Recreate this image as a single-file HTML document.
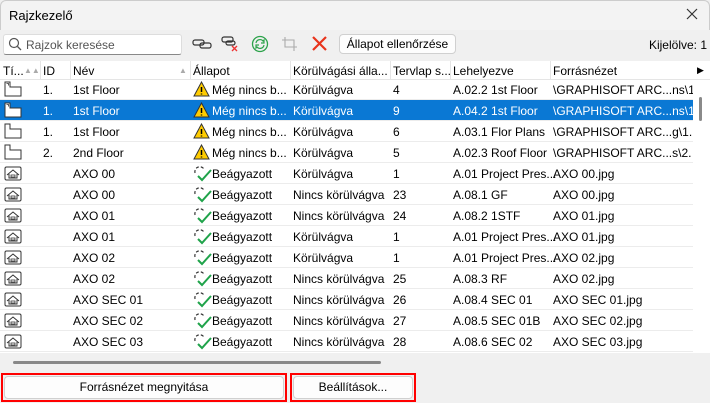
<!DOCTYPE html><html><head><meta charset="utf-8"><style>
*{box-sizing:border-box;margin:0;padding:0}
body{width:710px;height:403px;background:#f0f0f0;font-family:"Liberation Sans",sans-serif;font-size:12px;color:#000;position:relative;overflow:hidden}
.abs{position:absolute}
.title{left:0;top:0;width:710px;height:30px;background:#f3f3f3;border:1px solid #ccc;border-bottom:none;border-radius:6px 6px 0 0}
.table{left:0;top:61px;width:693px;height:292px;background:#fff}
.hdr{left:0;top:61px;width:710px;height:19px;background:#fff;border-bottom:1px solid #e5e5e5}
.hc{position:absolute;top:3px;white-space:nowrap}
.sep{position:absolute;top:0;width:1px;height:19px;background:#e5e5e5}
.row{position:absolute;left:0;width:693px;height:21px;border-bottom:1px solid #ececec;overflow:hidden}
.row span{position:absolute;top:4px;white-space:nowrap}
.sel{background:#0a78d4;color:#fff}
.btn{background:#fdfdfd;border:1px solid #d0d0d0;border-radius:4px;text-align:center}
</style></head><body>
<div class="abs title"></div>
<div class="abs" style="left:9px;top:8px;font-size:13px">Rajzkezelő</div>
<svg class="abs" style="left:686px;top:8px" width="12" height="12"><path d="M1 1L11 11M11 1L1 11" stroke="#333" stroke-width="1.2"/></svg>
<div class="abs" style="left:3px;top:34px;width:179px;height:21px;background:#fff;border:1px solid #ddd;border-bottom:1px solid #888;border-radius:3px"></div>
<svg class="abs" style="left:8px;top:37px" width="14" height="14"><circle cx="6" cy="6" r="4.5" fill="none" stroke="#555" stroke-width="1.2"/><path d="M9.5 9.5L13 13" stroke="#555" stroke-width="1.3"/></svg>
<div class="abs" style="left:26px;top:38px;color:#555;font-size:12px">Rajzok keresése</div>
<svg class="abs" style="left:192px;top:37px" width="22" height="14"><rect x="1" y="3" width="11" height="5" rx="2" fill="none" stroke="#333" stroke-width="1.2"/><rect x="8" y="6" width="11" height="5" rx="2" fill="none" stroke="#333" stroke-width="1.2"/></svg>
<svg class="abs" style="left:221px;top:35px" width="20" height="18"><rect x="1" y="2" width="11" height="5" rx="2" fill="none" stroke="#333" stroke-width="1.2"/><rect x="5" y="6" width="9" height="4" rx="2" fill="none" stroke="#333" stroke-width="1.2"/><path d="M11 11L16 16M16 11L11 16" stroke="#e33" stroke-width="1.4"/></svg>
<svg class="abs" style="left:251px;top:35px" width="18" height="18"><circle cx="9" cy="9" r="7.5" fill="none" stroke="#2ca24a" stroke-width="1.3"/><path d="M5 8a4 4 0 0 1 7-2l1-1v3h-3M13 10a4 4 0 0 1-7 2l-1 1v-3h3" fill="none" stroke="#2ca24a" stroke-width="1.2"/></svg>
<svg class="abs" style="left:282px;top:37px" width="16" height="14"><path d="M3 0v10h12M0 3h12v11" fill="none" stroke="#aaa" stroke-width="1.1"/></svg>
<svg class="abs" style="left:312px;top:36px" width="15" height="15"><path d="M1 1L14 14M14 1L1 14" stroke="#e8341c" stroke-width="2.2"/></svg>
<div class="abs btn" style="left:339px;top:34px;width:117px;height:20px;line-height:18px">Állapot ellenőrzése</div>
<div class="abs" style="right:3px;top:38px">Kijelölve: 1</div>
<div class="abs table"></div>
<div class="abs hdr">
<span class="hc" style="left:3px">Tí...</span><span class="hc" style="left:24px;font-size:8px;color:#aaa;top:5px">▲▲</span><div class="sep" style="left:40px"></div>
<span class="hc" style="left:43px">ID</span><div class="sep" style="left:70px"></div>
<span class="hc" style="left:73px">Név</span><span class="hc" style="left:179px;font-size:8px;color:#aaa;top:5px">▲</span><div class="sep" style="left:190px"></div>
<span class="hc" style="left:193px">Állapot</span><div class="sep" style="left:290px"></div>
<span class="hc" style="left:293px">Körülvágási álla...</span><div class="sep" style="left:390px"></div>
<span class="hc" style="left:393px">Tervlap s...</span><div class="sep" style="left:450px"></div>
<span class="hc" style="left:453px">Lehelyezve</span><div class="sep" style="left:550px"></div>
<span class="hc" style="left:553px">Forrásnézet</span>
<span class="hc" style="left:697px;font-size:9px;top:4px">▶</span>
</div>
<div class="abs" style="left:693px;top:80px;width:17px;height:273px;background:#fff"></div>
<div class="abs" style="left:699px;top:97px;width:3px;height:24px;background:#8a8a8a;border-radius:2px"></div>

<div class="row" style="top:79px"><svg style="position:absolute;left:4px;top:2px" width="18" height="16"><path d="M1 1h5v5h11v9H1z" fill="none" stroke="#333"/><path d="M2.5 2.5h2v2" fill="none" stroke="#333" stroke-width=".8"/></svg><span style="left:43px">1.</span><span style="left:73px">1st Floor</span><svg style="position:absolute;left:193px;top:2px" width="17" height="16"><path d="M8.5 1L16 15H1z" fill="#fc0" stroke="#333"/><path d="M8.5 6v5M8.5 12.5v1" stroke="#000" stroke-width="1.5"/></svg><span style="left:212px">Még nincs b...</span><span style="left:293px">Körülvágva</span><span style="left:393px">4</span><span style="left:453px">A.02.2 1st Floor</span><span style="left:553px">\GRAPHISOFT ARC...ns\1. 1s</span></div>
<div class="row sel" style="top:100px"><svg style="position:absolute;left:4px;top:2px" width="18" height="16"><path d="M1 1h5v5h11v9H1z" fill="#fff" stroke="#333"/><path d="M2.5 2.5h2v2" fill="none" stroke="#333" stroke-width=".8"/></svg><span style="left:43px">1.</span><span style="left:73px">1st Floor</span><svg style="position:absolute;left:193px;top:2px" width="17" height="16"><path d="M8.5 1L16 15H1z" fill="#fc0" stroke="#333"/><path d="M8.5 6v5M8.5 12.5v1" stroke="#000" stroke-width="1.5"/></svg><span style="left:212px">Még nincs b...</span><span style="left:293px">Körülvágva</span><span style="left:393px">9</span><span style="left:453px">A.04.2 1st Floor</span><span style="left:553px">\GRAPHISOFT ARC...ns\1. 1s</span></div>
<div class="row" style="top:121px"><svg style="position:absolute;left:4px;top:2px" width="18" height="16"><path d="M1 1h5v5h11v9H1z" fill="none" stroke="#333"/></svg><span style="left:43px">1.</span><span style="left:73px">1st Floor</span><svg style="position:absolute;left:193px;top:2px" width="17" height="16"><path d="M8.5 1L16 15H1z" fill="#fc0" stroke="#333"/><path d="M8.5 6v5M8.5 12.5v1" stroke="#000" stroke-width="1.5"/></svg><span style="left:212px">Még nincs b...</span><span style="left:293px">Körülvágva</span><span style="left:393px">6</span><span style="left:453px">A.03.1 Flor Plans</span><span style="left:553px">\GRAPHISOFT ARC...g\1. 1st</span></div>
<div class="row" style="top:142px"><svg style="position:absolute;left:4px;top:2px" width="18" height="16"><path d="M1 1h5v5h11v9H1z" fill="none" stroke="#333"/></svg><span style="left:43px">2.</span><span style="left:73px">2nd Floor</span><svg style="position:absolute;left:193px;top:2px" width="17" height="16"><path d="M8.5 1L16 15H1z" fill="#fc0" stroke="#333"/><path d="M8.5 6v5M8.5 12.5v1" stroke="#000" stroke-width="1.5"/></svg><span style="left:212px">Még nincs b...</span><span style="left:293px">Körülvágva</span><span style="left:393px">5</span><span style="left:453px">A.02.3 Roof Floor</span><span style="left:553px">\GRAPHISOFT ARC...s\2. 2nd</span></div>

<div id="axo"></div>
<script>
var d=[["AXO 00","Körülvágva","1","A.01 Project Pres...","AXO 00.jpg"],["AXO 00","Nincs körülvágva","23","A.08.1 GF","AXO 00.jpg"],["AXO 01","Nincs körülvágva","24","A.08.2 1STF","AXO 01.jpg"],["AXO 01","Körülvágva","1","A.01 Project Pres...","AXO 01.jpg"],["AXO 02","Körülvágva","1","A.01 Project Pres...","AXO 02.jpg"],["AXO 02","Nincs körülvágva","25","A.08.3 RF","AXO 02.jpg"],["AXO SEC 01","Nincs körülvágva","26","A.08.4 SEC 01","AXO SEC 01.jpg"],["AXO SEC 02","Nincs körülvágva","27","A.08.5 SEC 01B","AXO SEC 02.jpg"],["AXO SEC 03","Nincs körülvágva","28","A.08.6 SEC 02","AXO SEC 03.jpg"]];
var h="";d.forEach(function(r,i){var t=163+i*21;h+='<div class="row" style="top:'+t+'px"><svg style="position:absolute;left:4px;top:3px" width="18" height="15"><rect x="1" y="1" width="16" height="13" rx="1.5" fill="none" stroke="#333"/><path d="M3 9L9 4l6 5M5 8v4h8V8" fill="none" stroke="#333"/><rect x="7" y="9" width="4" height="2" fill="none" stroke="#333" stroke-width=".8"/></svg><span style="left:73px">'+r[0]+'</span><svg style="position:absolute;left:193px;top:2px" width="20" height="17"><path d="M2 8a5 5 0 0 1 9-4" fill="none" stroke="#333" stroke-width="1.2" stroke-dasharray="3 2"/><path d="M5 11l4 4 9-10" fill="none" stroke="#1fa34a" stroke-width="2"/></svg><span style="left:212px">Beágyazott</span><span style="left:293px">'+r[1]+'</span><span style="left:393px">'+r[2]+'</span><span style="left:453px">'+r[3]+'</span><span style="left:553px">'+r[4]+'</span></div>'});
document.getElementById("axo").innerHTML=h;
</script>
<div class="abs" style="left:13px;top:361px;width:368px;height:3px;background:#888;border-radius:2px"></div>
<div class="abs" style="left:1px;top:373px;width:286px;height:29px;border:2px solid #f00"></div>
<div class="abs btn" style="left:4px;top:376px;width:280px;height:23px;line-height:21px">Forrásnézet megnyitása</div>
<div class="abs" style="left:290px;top:373px;width:126px;height:29px;border:2px solid #f00"></div>
<div class="abs btn" style="left:293px;top:376px;width:120px;height:23px;line-height:21px">Beállítások...</div>
</body></html>
